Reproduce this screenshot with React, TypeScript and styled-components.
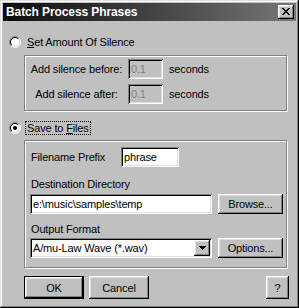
import React from 'react';
import styled, { createGlobalStyle, css } from 'styled-components';

const GlobalStyle = createGlobalStyle`
  html, body {
    margin: 0;
    padding: 0;
    background: #c0c0c0;
  }
  body {
    font-family: "Liberation Sans", Arial, sans-serif;
    font-size: 11px;
    letter-spacing: -0.15px;
    color: #000;
  }
`;

const raised = css`
  box-shadow: inset -1px -1px #000, inset 1px 1px #fff, inset -2px -2px #808080, inset 2px 2px #dfdfdf;
`;

const sunken = css`
  box-shadow: inset 1px 1px #808080, inset -1px -1px #fff, inset 2px 2px #000, inset -2px -2px #dfdfdf;
`;

const Window = styled.div`
  box-sizing: border-box;
  width: 299px;
  height: 308px;
  padding: 3px;
  background: #c0c0c0;
  box-shadow: inset -1px -1px #000, inset 1px 1px #dfdfdf, inset -2px -2px #808080, inset 2px 2px #fff;
  display: flex;
  flex-direction: column;
`;

const TitleBar = styled.div`
  height: 18px;
  flex: none;
  display: flex;
  align-items: center;
  justify-content: space-between;
  padding: 0 2px 0 3px;
  background: linear-gradient(90deg, #0c0c0c, #777777);
  color: #fff;
  font-weight: bold;
  font-size: 12px;
  letter-spacing: -0.1px;
`;

const CloseButton = styled.div`
  width: 16px;
  height: 14px;
  display: flex;
  align-items: center;
  justify-content: center;
  background: #c0c0c0;
  ${raised}
  svg { display: block; margin: -1px 0 0 0; }
`;

const Body = styled.div`
  display: flex;
  flex-direction: column;
  padding: 14px 7px 0 6px;
`;

const RadioRow = styled.div<{ $gap?: number }>`
  display: flex;
  align-items: center;
  height: 14px;
  gap: 4px;
  margin-top: ${({ $gap }) => $gap ?? 0}px;
`;

const RadioLabel = styled.span<{ $focused?: boolean }>`
  padding: 0 1px;
  line-height: 12px;
  border: 1px dotted ${({ $focused }) => ($focused ? '#000' : 'transparent')};
`;

const Group = styled.div<{ $gap: number }>`
  box-sizing: border-box;
  width: 263px;
  margin: ${({ $gap }) => $gap}px 0 0 15px;
  border: 1px solid #808080;
  box-shadow: 1px 1px 0 #fff, inset 1px 1px 0 #fff;
`;

const SilenceGroup = styled(Group)`
  display: grid;
  grid-template-columns: 103px 35px auto;
  row-gap: 5px;
  align-items: center;
  padding: 3px 0 6px 0;
`;

const SilenceLabel = styled.span`
  text-align: center;
`;

const Units = styled.span`
  margin-left: 6px;
`;

const FilesGroup = styled(Group)`
  display: flex;
  flex-direction: column;
  padding: 6px 2px 9px 5px;
`;

const FieldRow = styled.div<{ $gap?: number }>`
  display: flex;
  align-items: center;
  gap: 6px;
  margin-top: ${({ $gap }) => $gap ?? 0}px;
`;

const PrefixLabel = styled.span`
  width: 84px;
  padding-left: 1px;
`;

const FieldLabel = styled.div<{ $gap: number }>`
  line-height: 13px;
  padding-left: 1px;
  margin-top: ${({ $gap }) => $gap}px;
`;

const TextBox = styled.input<{ $w: number }>`
  box-sizing: border-box;
  width: ${({ $w }) => $w}px;
  height: 20px;
  border: 0;
  outline: none;
  margin: 0;
  padding: 0 3px;
  font: inherit;
  letter-spacing: inherit;
  color: #000;
  background: #fff;
  ${sunken}
  &:disabled {
    background: #c0c0c0;
    color: #808080;
  }
`;

const Combo = styled.div`
  box-sizing: border-box;
  width: 182px;
  height: 20px;
  padding: 2px;
  display: flex;
  align-items: center;
  background: #fff;
  ${sunken}
`;

const ComboText = styled.span`
  flex: 1;
  padding-left: 1px;
  white-space: nowrap;
  overflow: hidden;
`;

const ComboArrow = styled.div`
  width: 16px;
  height: 16px;
  display: flex;
  align-items: center;
  justify-content: center;
  background: #c0c0c0;
  ${raised}
`;

const Button = styled.button<{ $w: number; $h?: number; $default?: boolean }>`
  box-sizing: border-box;
  width: ${({ $w }) => $w}px;
  height: ${({ $h }) => $h ?? 23}px;
  margin: 0;
  padding: 0;
  border: ${({ $default }) => ($default ? '1px solid #000' : 'none')};
  font: inherit;
  letter-spacing: inherit;
  color: #000;
  background: #c0c0c0;
  ${raised}
`;

const ButtonBar = styled.div`
  display: flex;
  align-items: center;
  gap: 5px;
  margin: 8px 0 0 15px;
`;

const HelpButton = styled(Button)`
  margin-left: auto;
`;

const CloseGlyph = () => (
  <svg width="8" height="7" viewBox="0 0 8 7" shapeRendering="crispEdges">
    <path
      fill="#000"
      d="M0 0h2v1H0zM6 0h2v1H6zM1 1h2v1H1zM5 1h2v1H5zM2 2h4v1H2zM3 3h2v1H3zM2 4h4v1H2zM1 5h2v1H1zM5 5h2v1H5zM0 6h2v1H0zM6 6h2v1H6z"
    />
  </svg>
);

const ArrowGlyph = () => (
  <svg width="7" height="4" viewBox="0 0 7 4" shapeRendering="crispEdges">
    <path fill="#000" d="M0 0h7v1H0zM1 1h5v1H1zM2 2h3v1H2zM3 3h1v1H3z" />
  </svg>
);

const Radio: React.FC<{ checked?: boolean }> = ({ checked }) => (
  <svg width="12" height="12" viewBox="0 0 12 12">
    <circle cx="6" cy="6" r="4.5" fill="#fff" />
    <path d="M2.1 9.9A5.5 5.5 0 0 1 9.9 2.1" fill="none" stroke="#808080" />
    <path d="M9.9 2.1A5.5 5.5 0 0 1 2.1 9.9" fill="none" stroke="#fff" />
    <path d="M2.8 9.2A4.5 4.5 0 0 1 9.2 2.8" fill="none" stroke="#000" />
    <path d="M9.2 2.8A4.5 4.5 0 0 1 2.8 9.2" fill="none" stroke="#dfdfdf" />
    {checked && <circle cx="6" cy="6" r="2" fill="#000" />}
  </svg>
);

export default function App() {
  return (
    <>
      <GlobalStyle />
      <Window>
        <TitleBar>
          <span>Batch Process Phrases</span>
          <CloseButton>
            <CloseGlyph />
          </CloseButton>
        </TitleBar>
        <Body>
          <RadioRow>
            <Radio />
            <RadioLabel>
              <u>S</u>et Amount Of Silence
            </RadioLabel>
          </RadioRow>
          <SilenceGroup $gap={6}>
            <SilenceLabel>Add silence before:</SilenceLabel>
            <TextBox $w={35} value="0.1" disabled readOnly />
            <Units>seconds</Units>
            <SilenceLabel>Add silence after:</SilenceLabel>
            <TextBox $w={35} value="0.1" disabled readOnly />
            <Units>seconds</Units>
          </SilenceGroup>
          <RadioRow $gap={10}>
            <Radio checked />
            <RadioLabel $focused>
              Save to <u>F</u>iles
            </RadioLabel>
          </RadioRow>
          <FilesGroup $gap={5}>
            <FieldRow>
              <PrefixLabel>Filename Prefix</PrefixLabel>
              <TextBox $w={58} value="phrase" readOnly />
            </FieldRow>
            <FieldLabel $gap={11}>Destination Directory</FieldLabel>
            <FieldRow $gap={3}>
              <TextBox $w={182} value="e:\music\samples\temp" readOnly />
              <Button $w={65} $h={20}>Browse...</Button>
            </FieldRow>
            <FieldLabel $gap={9}>Output Format</FieldLabel>
            <FieldRow $gap={2}>
              <Combo>
                <ComboText>A/mu-Law Wave (*.wav)</ComboText>
                <ComboArrow>
                  <ArrowGlyph />
                </ComboArrow>
              </Combo>
              <Button $w={65} $h={20}>Options...</Button>
            </FieldRow>
          </FilesGroup>
          <ButtonBar>
            <Button $w={60} $default>OK</Button>
            <Button $w={60}>Cancel</Button>
            <HelpButton $w={23}>?</HelpButton>
          </ButtonBar>
        </Body>
      </Window>
    </>
  );
}
